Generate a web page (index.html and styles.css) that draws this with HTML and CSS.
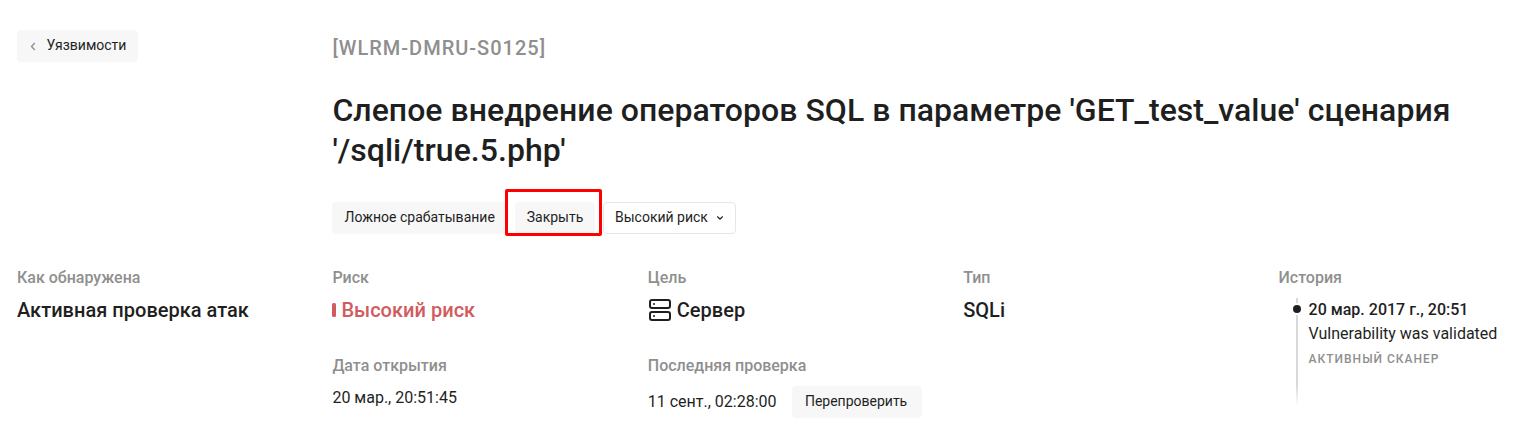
FILE: index.html
```html
<!DOCTYPE html>
<html lang="ru">
<head>
<meta charset="utf-8">
<title>WLRM-DMRU-S0125</title>
<link rel="stylesheet" href="styles.css">
</head>
<body>
<main class="page">
  <header class="top">
    <div class="side">
      <a class="btn back"><svg class="chev" viewBox="0 0 6 9"><path d="M4.8 1 1.5 4.5l3.3 3.5"/></svg>Уязвимости</a>
    </div>
    <div class="head">
      <div class="code">[WLRM-DMRU-S0125]</div>
      <h1 class="title">Слепое внедрение операторов SQL в параметре 'GET_test_value' сценария '/sqli/true.5.php'</h1>
      <div class="actions">
        <button class="btn false-positive">Ложное срабатывание</button>
        <button class="btn close">Закрыть</button>
        <button class="btn risk-select">Высокий риск<svg class="caret" viewBox="0 0 8 6"><path d="M1.3 1.5 4 4.2l2.7-2.7"/></svg></button>
      </div>
    </div>
  </header>
  <section class="grid">
    <div class="cell">
      <div class="label">Как обнаружена</div>
      <div class="value">Активная проверка атак</div>
    </div>
    <div class="cell">
      <div class="label">Риск</div>
      <div class="value risk"><span class="bar"></span>Высокий риск</div>
      <div class="label second">Дата открытия</div>
      <div class="date">20 мар., 20:51:45</div>
    </div>
    <div class="cell">
      <div class="label">Цель</div>
      <div class="value target"><svg class="server" viewBox="0 0 24 24"><rect x="2" y="2" width="20" height="8" rx="2"/><rect x="2" y="14" width="20" height="8" rx="2"/><path d="M6 6h.01M6 18h.01"/></svg>Сервер</div>
      <div class="label second">Последняя проверка</div>
      <div class="check">11 сент., 02:28:00<button class="btn recheck">Перепроверить</button></div>
    </div>
    <div class="cell">
      <div class="label">Тип</div>
      <div class="value">SQLi</div>
    </div>
    <div class="cell history">
      <div class="label">История</div>
      <div class="timeline">
        <div class="rail"><span class="dot"></span></div>
        <div class="event">
          <div class="when">20 мар. 2017 г., 20:51</div>
          <div class="what">Vulnerability was validated</div>
          <div class="who">АКТИВНЫЙ СКАНЕР</div>
        </div>
      </div>
    </div>
  </section>
</main>
</body>
</html>
```
FILE: styles.css
```css
*, *::after { box-sizing: border-box; }
body { margin: 0; background: #fff; color: #1f1f1f; font-family: Roboto, sans-serif; }
.page { padding: 30px 0 0 17px; }
.top { display: flex; height: 238px; }
.side { flex: 0 0 315.4px; }
.head { width: 1160px; padding-top: 6px; }
.btn { display: inline-flex; align-items: center; justify-content: center; height: 32px; padding: 0 0 2px; border: 0; border-radius: 4px; background: #f7f7f7; color: #1f1f1f; font: 400 14px/20px Roboto, sans-serif; white-space: nowrap; }
.back { width: 121px; gap: 11px; padding-left: 1px; }
.chev { width: 6px; height: 9px; margin-top: 2px; fill: none; stroke: #8c8c8c; stroke-width: 1.3; }
.code { font-weight: 500; font-size: 20px; line-height: 24px; letter-spacing: 1px; color: #8f8f8f; }
.title { margin: 30px 0 0; font-weight: 500; font-size: 32px; line-height: 40px; letter-spacing: .03px; }
.actions { display: flex; gap: 8px; margin-top: 32px; }
.false-positive { width: 174.6px; }
.close { position: relative; width: 80px; }
/* red frame laid over the button row */
.close::after { content: ""; position: absolute; left: -10px; top: -13px; width: 97px; height: 47px; border: 3px solid #f00; border-radius: 2px; }
.risk-select { width: 133px; border: 1px solid #e6e6e6; background: #fff; gap: 8px; }
.caret { width: 8px; height: 6px; margin-top: 2px; fill: none; stroke: #1f1f1f; stroke-width: 1.2; }
.grid { display: grid; grid-template-columns: repeat(4, 315.4px) 1fr; }
.label { font-weight: 500; font-size: 16px; line-height: 20px; color: #8f8f8f; }
.value { display: flex; align-items: center; height: 24px; margin-top: 10px; font-weight: 500; font-size: 20px; line-height: 24px; letter-spacing: .02px; }
.risk { color: #d15b5e; gap: 5px; }
.bar { width: 4px; height: 14px; border-radius: 1.5px; background: #d15b5e; }
.second { margin-top: 34px; }
.date { margin-top: 12px; font-size: 16px; line-height: 20px; }
.target { gap: 5px; }
.server { width: 24px; height: 24px; fill: none; stroke: #1f1f1f; stroke-width: 2; stroke-linecap: round; }
.check { display: flex; align-items: center; margin-top: 10px; gap: 15px; font-size: 16px; line-height: 20px; }
.recheck { width: 130px; padding-right: 1px; }
.timeline { display: flex; margin-top: 10px; padding-left: 14px; }
.rail { position: relative; flex: 0 0 16px; height: 108px; background: linear-gradient(#d8d8d8 80%, #fff) 3px 0 / 2px 100% no-repeat; }
.dot { position: absolute; left: 0; top: 7px; width: 8px; height: 8px; border-radius: 50%; background: #1f1f1f; box-shadow: 0 0 0 2px #fff; }
.event { white-space: nowrap; font-size: 16px; line-height: 24px; }
.when { font-weight: 500; }
.who { padding-top: 1px; font-weight: 500; font-size: 12px; line-height: 24px; letter-spacing: 1px; color: #8f8f8f; }
```
